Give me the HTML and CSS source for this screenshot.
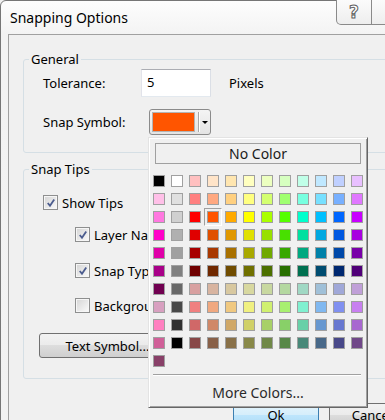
FILE: index.html
```html
<!DOCTYPE html>
<html lang="en">
<head>
  <meta charset="UTF-8">
  <title>Snapping Options</title>
  <link rel="stylesheet" href="styles.css">
</head>
<body>

  <div class="window">
    <div class="titlebar">
      <span class="title">Snapping Options</span>
      <div class="caption-btns">
        <button class="cap-btn help">?</button>
        <button class="cap-btn close"></button>
      </div>
    </div>

    <div class="client">
      <fieldset class="group">
        <legend>General</legend>
        <div class="group-body general-body">
          <div class="row">
            <label class="lbl">Tolerance:</label>
            <input class="textbox" type="text" value="5">
            <span class="unit">Pixels</span>
          </div>
          <div class="row row-symbol">
            <label class="lbl">Snap Symbol:</label>
            <div class="combo">
              <span class="combo-color"></span>
              <span class="combo-divider"></span>
              <span class="combo-arrow"></span>
            </div>
          </div>
        </div>
      </fieldset>

      <fieldset class="group tips">
        <legend>Snap Tips</legend>
        <div class="group-body tips-body">
          <label class="check">
            <span class="box"><svg viewBox="0 0 13 13"><path d="M3 6.5 L5.4 9.5 L10 2.8" /></svg></span>Show Tips
          </label>
          <label class="check sub first-sub">
            <span class="box"><svg viewBox="0 0 13 13"><path d="M3 6.5 L5.4 9.5 L10 2.8" /></svg></span>Layer Name
          </label>
          <label class="check sub">
            <span class="box"><svg viewBox="0 0 13 13"><path d="M3 6.5 L5.4 9.5 L10 2.8" /></svg></span>Snap Type
          </label>
          <label class="check sub">
            <span class="box"></span>Background
          </label>
          <button class="btn text-symbol">Text Symbol...</button>
        </div>
      </fieldset>

      <div class="footer">
        <button class="btn default">Ok</button>
        <button class="btn">Cancel</button>
      </div>
    </div>

    <!-- color picker dropdown, open over the dialog -->
    <div class="color-popup">
      <button class="no-color">No Color</button>
      <div class="swatches" id="swatches"></div>
      <div class="separator"></div>
      <div class="more">More Colors...</div>
    </div>
  </div>

  <script>
    const colors = [
      "#000000", "#ffffff", "#ffc0c0", "#ffe4c8", "#ffe6b0", "#ffffc0", "#ecffc0", "#d6ffc0", "#c0ffe8", "#c0e8ff", "#c0d0ff", "#e8c0ff",
      "#ffc0e8", "#e0e0e0", "#ff8080", "#ffa880", "#ffd080", "#ffff80", "#d4ff70", "#a0ff70", "#78ffe0", "#78e0ff", "#78b0ff", "#e078ff",
      "#ff78e0", "#d0d0d0", "#ff0000", "#ff5500", "#ffaa00", "#ffff00", "#aaff00", "#55ff00", "#00ffcc", "#00c0ff", "#0066ff", "#c800ff",
      "#ff00c8", "#b0b0b0", "#e00000", "#e05000", "#e09800", "#e0e000", "#98e000", "#48e000", "#00e0a0", "#00a8e0", "#0058e0", "#a800e0",
      "#e000a8", "#a0a0a0", "#a80000", "#a83800", "#a87000", "#a8a800", "#70a800", "#38a800", "#00a880", "#0080a8", "#0048a8", "#7800a8",
      "#a80088", "#808080", "#700000", "#702800", "#704c00", "#707000", "#4c7000", "#287000", "#007050", "#004c70", "#002870", "#500078",
      "#700050", "#686868", "#d8a0a0", "#d8b4a0", "#d8c8a0", "#d8d8a0", "#c8d8a0", "#b4d8a0", "#a0d8c4", "#a0c0d8", "#a0a8d8", "#c0a0d8",
      "#d8a0c0", "#484848", "#f08080", "#f0a880", "#f0c880", "#f0f080", "#d0f070", "#a8f070", "#80f0d0", "#80b8f0", "#8090f0", "#c880f0",
      "#ff80c0", "#303030", "#d06868", "#d08868", "#d0a868", "#d0d068", "#a8d068", "#88d068", "#68d0a8", "#6898d0", "#6878d0", "#a868d0",
      "#d06098", "#000000", "#884848", "#886048", "#887048", "#888848", "#708848", "#588848", "#488878", "#486888", "#484888", "#704888",
      "#884068"
    ];
    const selected = 27; // current snap symbol colour

    const grid = document.getElementById("swatches");
    colors.forEach((c, i) => {
      const s = document.createElement("span");
      s.className = i === selected ? "swatch selected" : "swatch";
      s.style.background = c;
      grid.appendChild(s);
    });
  </script>

</body>
</html>
```

FILE: styles.css
```css
body {
  margin: 0;
  width: 385px;
  height: 420px;
  overflow: hidden;
  font-family: "Noto Sans", "Open Sans", sans-serif;
  font-size: 13px;
  color: #000;
  background: #f0f0f0;
}

.window {
  position: relative;
  width: 439px;
  height: 470px;
  box-sizing: border-box;
  border: 1px solid #767676;
  border-radius: 6px 6px 0 0;
  background: linear-gradient(#fdfdfd, #f3f3f3 34px, #f2f2f2);
}

/* title bar */
.titlebar {
  display: flex;
  align-items: flex-start;
  height: 33px;
}
.title {
  font-size: 14px;
  line-height: 20px;
  margin: 7px 0 0 9px;
}
.caption-btns {
  display: flex;
  margin: -1px 18px 0 auto;
}
.cap-btn {
  height: 25px;
  box-sizing: border-box;
  padding: 0;
  border: 1px solid #8a8a8a;
  border-top: none;
  background: linear-gradient(#fbfbfb, #eeeeee);
}
.help {
  width: 36px;
  border-radius: 0 0 0 5px;
  font-family: "DejaVu Sans", sans-serif;
  font-weight: bold;
  font-size: 17px;
  line-height: 22px;
  color: #fff;
  -webkit-text-stroke: 1px #5e5e5e;
}
.close {
  width: 48px;
  border-left: none;
}

/* client area */
.client {
  margin: 0 7px;
  height: 440px;
  border: 1px solid #a0a0a0;
  border-bottom: none;
  background: #f0f0f0;
  padding: 17px 15px 0 14px;
}

.group {
  margin: 0;
  padding: 0;
  min-width: 0;
  border: 1px solid #d5dfe5;
  border-radius: 3px;
}
.group legend {
  margin-left: 5px;
  padding: 0 2px;
  line-height: 15px;
}
.tips {
  margin-top: 9px;
}

.general-body {
  padding: 2px 0 17px 19px;
}
.row {
  display: flex;
  align-items: center;
  height: 28px;
}
.row-symbol {
  height: 26px;
  margin-top: 12px;
}
.lbl {
  width: 98px;
}
.textbox {
  width: 70px;
  height: 28px;
  box-sizing: border-box;
  margin: 0;
  padding: 0 0 2px 5px;
  border: 1px solid;
  border-color: #abadb3 #dbdfe6 #e3e9ef #e2e3ea;
  background: #fff;
  font: inherit;
}
.unit {
  margin-left: 18px;
}

.combo {
  display: flex;
  align-items: center;
  width: 62px;
  height: 26px;
  box-sizing: border-box;
  margin-left: 8px;
  padding: 2px;
  border: 1px solid #8b8b8b;
  border-radius: 3px;
  background: linear-gradient(#f4f4f4, #e4e4e4);
}
.combo-color {
  width: 46px;
  height: 20px;
  box-sizing: border-box;
  border: 1px solid #b4b4b4;
  background: #ff5500;
}
.combo-divider {
  width: 1px;
  height: 20px;
  margin-left: 3px;
  background: #a8a8a8;
  border-right: 1px solid #fff;
}
.combo-arrow {
  margin-left: 2px;
  border-left: 3px solid transparent;
  border-right: 3px solid transparent;
  border-top: 3px solid #000;
}

/* snap tips */
.tips-body {
  padding: 18px 0 20px 15px;
}
.check {
  display: flex;
  align-items: center;
  gap: 4px;
  height: 15px;
  margin-left: 4px;
}
.check.sub {
  margin-left: 36px;
  margin-top: 21px;
}
.check.first-sub {
  margin-top: 17px;
}
.check.sub:nth-of-type(4) {
  margin-top: 20px;
}
.box {
  display: flex;
  align-items: center;
  justify-content: center;
  width: 15px;
  height: 15px;
  box-sizing: border-box;
  border: 1px solid #8e8f8f;
  background: linear-gradient(135deg, #d4d4d4, #fbfbfb);
  box-shadow: inset 0 0 0 1px #f6f6f6;
}
.box svg {
  width: 12px;
  height: 12px;
}
.box path {
  fill: none;
  stroke: #4c5d8f;
  stroke-width: 2;
}

.btn {
  display: block;
  height: 25px;
  box-sizing: border-box;
  padding: 0;
  border: 1px solid #707070;
  border-radius: 3px;
  background: linear-gradient(#f2f2f2 0%, #ebebeb 50%, #dddddd 50%, #cfcfcf 100%);
  font: inherit;
  color: #000;
}
.text-symbol {
  width: 137px;
  margin-top: 20px;
}

.footer {
  display: flex;
  justify-content: flex-end;
  gap: 10px;
  margin-top: 24px;
}
.footer .btn {
  width: 86px;
  height: 23px;
}
.footer .default {
  border-color: #3c7fb1;
  background: linear-gradient(#e5f4fc 0%, #d6eefb 50%, #bee6fd 50%, #b0dcf5 100%);
}

/* colour dropdown */
.color-popup {
  position: absolute;
  left: 147px;
  top: 136px;
  width: 220px;
  height: 271px;
  box-sizing: border-box;
  overflow: hidden;
  border: 1px solid;
  border-color: #e3e3e3 #666 #666 #e3e3e3;
  box-shadow: inset 1px 1px #fff, inset -1px -1px #a0a0a0;
  background: #f0f0f0;
}
.no-color {
  display: block;
  width: 206px;
  height: 21px;
  margin: 5px 0 0 6px;
  padding: 0;
  border: 1px solid #a0a0a0;
  background: #f0f0f0;
  font: inherit;
  font-size: 14px;
  color: #1a1a1a;
}
.swatches {
  display: grid;
  grid-template-columns: repeat(12, 12px);
  grid-auto-rows: 12px;
  gap: 6px;
  margin: 11px 0 0 4px;
}
.swatch {
  position: relative;
  box-sizing: border-box;
  border: 1px solid #a0a0a0;
}
.swatch.selected::after {
  content: "";
  position: absolute;
  inset: -4px;
  border: 1px solid;
  border-color: #a0a0a0 #fff #fff #a0a0a0;
}
.separator {
  width: 208px;
  margin: 7px 0 0 4px;
  border-top: 1px solid #a0a0a0;
  border-bottom: 1px solid #fff;
}
.more {
  padding-top: 3px;
  line-height: 28px;
  text-align: center;
  font-size: 14px;
  color: #2a2a2a;
}
```
